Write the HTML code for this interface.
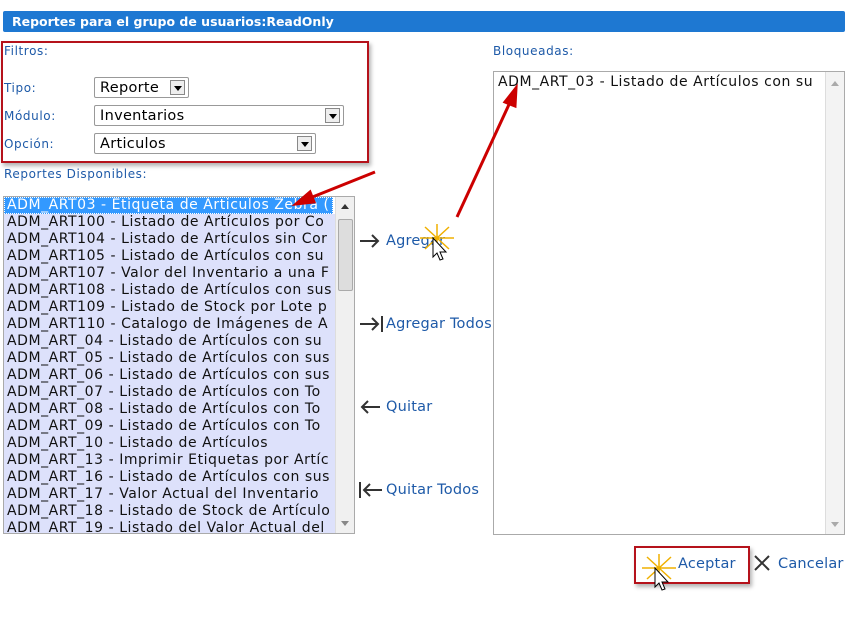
<!DOCTYPE html>
<html><head><meta charset="utf-8"><style>
body{margin:0;width:848px;height:640px;background:#fff;position:relative;overflow:hidden;font-family:"DejaVu Sans","Liberation Sans",sans-serif;}
.a{position:absolute}
.hdr{left:3px;top:11px;width:842px;height:21px;background:#1e78d2;color:#fff;font-weight:bold;font-size:12.5px;line-height:21px;padding-left:9px;box-sizing:border-box;border-radius:2px}
.lbl{font-size:12px;color:#1e5aa8;letter-spacing:.6px}
.sel{border:1px solid #999;border-radius:2px;height:21px;font-size:14.5px;line-height:21px;padding-left:5px;box-sizing:border-box;background:#fff;color:#000;letter-spacing:.3px}
.dd{position:absolute;right:3px;top:2px;width:15px;height:15px;border:1px solid #888;background:#eee;box-sizing:border-box}
.dd:after{content:"";position:absolute;left:3px;top:5px;border-left:4px solid transparent;border-right:4px solid transparent;border-top:5px solid #000}
.list{border:1px solid #aaa;background:#fff;overflow:hidden}
.row{height:17px;line-height:17px;font-size:14px;letter-spacing:.55px;white-space:nowrap;padding-left:3px;color:#111;background:#dde1fb;overflow:hidden}
.sb{position:absolute;right:0;top:0;bottom:0;width:18px;background:#f0f0f0;border-left:1px solid #ddd}
.btn{font-size:14.5px;color:#1e5aa8;white-space:nowrap;letter-spacing:.2px}
</style></head><body>
<div class="a hdr">Reportes para el grupo de usuarios:ReadOnly</div>
<div class="a" style="left:1px;top:41px;width:364px;height:118px;border:2px solid #b5121b;box-shadow:2px 3px 4px rgba(0,0,0,.3)"></div>
<div class="a lbl" style="left:4px;top:44px">Filtros:</div>
<div class="a lbl" style="left:4px;top:81px">Tipo:</div>
<div class="a lbl" style="left:4px;top:109px">Módulo:</div>
<div class="a lbl" style="left:4px;top:137px">Opción:</div>
<div class="a sel" style="left:94px;top:77px;width:95px">Reporte<span class="dd"></span></div>
<div class="a sel" style="left:94px;top:105px;width:250px">Inventarios<span class="dd"></span></div>
<div class="a sel" style="left:94px;top:133px;width:222px">Articulos<span class="dd"></span></div>
<div class="a lbl" style="left:4px;top:167px">Reportes Disponibles:</div>
<div class="a list" style="left:3px;top:196px;width:350px;height:336px">
<div class="row" style="background:#3399ff;color:#fff;outline:1px dotted #fff;outline-offset:-1px;width:326px">ADM_ART03 - Etiqueta de Articulos Zebra (</div>
<div class="row">ADM_ART100 - Listado de Artículos por Co</div>
<div class="row">ADM_ART104 - Listado de Artículos sin Cor</div>
<div class="row">ADM_ART105 - Listado de Artículos con su</div>
<div class="row">ADM_ART107 - Valor del Inventario a una F</div>
<div class="row">ADM_ART108 - Listado de Artículos con sus</div>
<div class="row">ADM_ART109 - Listado de Stock por Lote p</div>
<div class="row">ADM_ART110 - Catalogo de Imágenes de A</div>
<div class="row">ADM_ART_04 - Listado de Artículos con su</div>
<div class="row">ADM_ART_05 - Listado de Artículos con sus</div>
<div class="row">ADM_ART_06 - Listado de Artículos con sus</div>
<div class="row">ADM_ART_07 - Listado de Artículos con To</div>
<div class="row">ADM_ART_08 - Listado de Artículos con To</div>
<div class="row">ADM_ART_09 - Listado de Artículos con To</div>
<div class="row">ADM_ART_10 - Listado de Artículos</div>
<div class="row">ADM_ART_13 - Imprimir Etiquetas por Artíc</div>
<div class="row">ADM_ART_16 - Listado de Artículos con sus</div>
<div class="row">ADM_ART_17 - Valor Actual del Inventario</div>
<div class="row">ADM_ART_18 - Listado de Stock de Artículo</div>
<div class="row">ADM_ART_19 - Listado del Valor Actual del</div>
<div class="sb"><div style="position:absolute;left:2px;top:22px;width:13px;height:70px;background:#ddd;border:1px solid #aaa;border-radius:2px"></div>
<div style="position:absolute;left:5px;top:7px;border-left:4px solid transparent;border-right:4px solid transparent;border-bottom:5px solid #333"></div>
<div style="position:absolute;left:5px;bottom:7px;border-left:4px solid transparent;border-right:4px solid transparent;border-top:5px solid #888"></div></div>
</div>
<svg class="a" style="left:358px;top:230px" width="30" height="275"><g stroke="#333" stroke-width="2" fill="none">
<path d="M2 11H20M14 5l6 6-6 6"/><path d="M2 94H20M14 88l6 6-6 6M24 86v16"/>
<path d="M4 177H22M10 171l-6 6 6 6"/><path d="M6 260H24M12 254l-6 6 6 6M2 252v16"/></g></svg>
<div class="a btn" style="left:386px;top:233px">Agregar</div>
<div class="a btn" style="left:386px;top:316px">Agregar Todos</div>
<div class="a btn" style="left:386px;top:399px">Quitar</div>
<div class="a btn" style="left:386px;top:482px">Quitar Todos</div>
<div class="a lbl" style="left:493px;top:44px">Bloqueadas:</div>
<div class="a list" style="left:493px;top:71px;width:350px;height:462px">
<div class="row" style="background:#fff;padding-top:2px;padding-left:4px">ADM_ART_03 - Listado de Artículos con su</div>
<div class="sb" style="background:#f3f3f3"><div style="position:absolute;left:5px;top:9px;border-left:4px solid transparent;border-right:4px solid transparent;border-bottom:5px solid #aaa"></div><div style="position:absolute;left:5px;bottom:7px;border-left:4px solid transparent;border-right:4px solid transparent;border-top:5px solid #aaa"></div></div>
</div>
<svg class="a" style="left:0;top:0" width="848" height="640">
<g stroke="#c00" stroke-width="3" fill="#c00">
<path d="M375 172L305 200"/><path d="M296 204l14-12 4 10z"/>
<path d="M457 217L512 98"/><path d="M516 88l-1 18-10-4z"/>
</g>
<g stroke="#333" stroke-width="2"><path d="M755 556l14 14M769 556l-14 14"/></g>
</svg>
<div class="a" style="left:634px;top:546px;width:112px;height:34px;border:2px solid #b5121b;box-shadow:2px 3px 4px rgba(0,0,0,.3)"></div>
<div class="a btn" style="left:678px;top:556px">Aceptar</div>
<div class="a btn" style="left:778px;top:556px">Cancelar</div>
<svg class="a" style="left:418px;top:222px" width="40" height="45"><g stroke="#f0b000" stroke-width="1.5"><path d="M2 16H36M19 2V30M7 5l24 22M31 5L7 27"/></g><path d="M15 16v19l4-4 3 7 3-1-3-7 6 0z" fill="#fff" stroke="#000"/></svg>
<svg class="a" style="left:640px;top:552px" width="40" height="45"><g stroke="#f0b000" stroke-width="1.5"><path d="M2 16H36M19 2V30M7 5l24 22M31 5L7 27"/></g><path d="M15 16v19l4-4 3 7 3-1-3-7 6 0z" fill="#fff" stroke="#000"/></svg>
</body></html>
